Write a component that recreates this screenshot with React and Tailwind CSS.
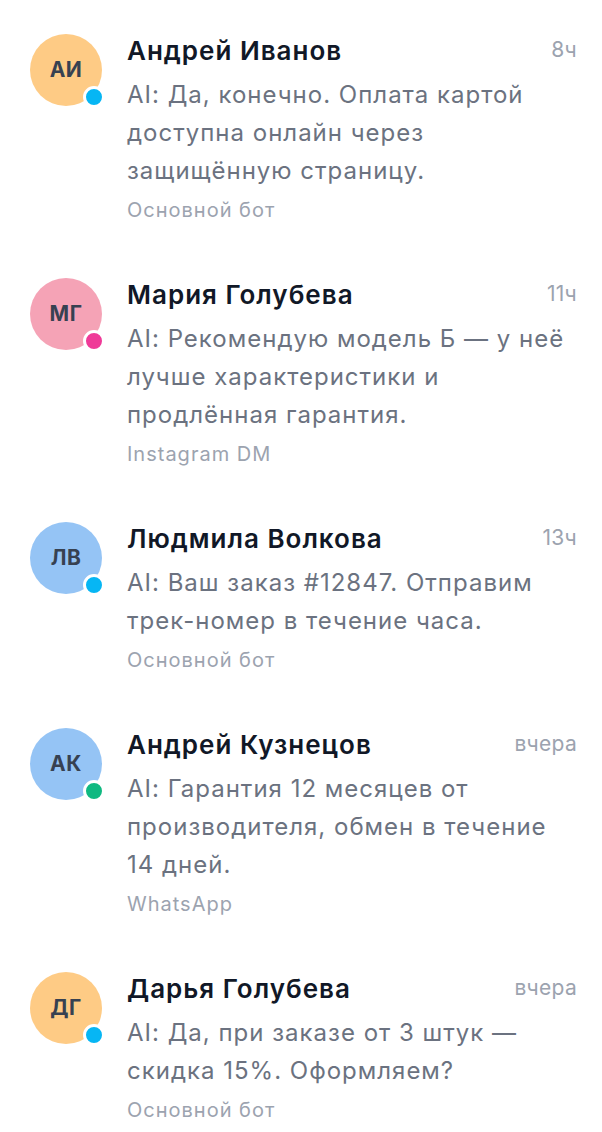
const chats = [
  {
    initials: 'АИ',
    name: 'Андрей Иванов',
    time: '8ч',
    text: 'AI: Да, конечно. Оплата картой доступна онлайн через защищённую страницу.',
    source: 'Основной бот',
    avatar: 'bg-[#fecb85]',
    dot: 'bg-[#06b6f4]',
  },
  {
    initials: 'МГ',
    name: 'Мария Голубева',
    time: '11ч',
    text: 'AI: Рекомендую модель Б — у неё лучше характеристики и продлённая гарантия.',
    source: 'Instagram DM',
    avatar: 'bg-[#f5a3b6]',
    dot: 'bg-[#ef3a98]',
  },
  {
    initials: 'ЛВ',
    name: 'Людмила Волкова',
    time: '13ч',
    text: 'AI: Ваш заказ #12847. Отправим трек-номер в течение часа.',
    source: 'Основной бот',
    avatar: 'bg-[#95c4f5]',
    dot: 'bg-[#06b6f4]',
  },
  {
    initials: 'АК',
    name: 'Андрей Кузнецов',
    time: 'вчера',
    text: 'AI: Гарантия 12 месяцев от производителя, обмен в течение 14 дней.',
    source: 'WhatsApp',
    avatar: 'bg-[#95c4f5]',
    dot: 'bg-[#10b981]',
  },
  {
    initials: 'ДГ',
    name: 'Дарья Голубева',
    time: 'вчера',
    text: 'AI: Да, при заказе от 3 штук — скидка 15%. Оформляем?',
    source: 'Основной бот',
    avatar: 'bg-[#fecb85]',
    dot: 'bg-[#06b6f4]',
  },
]

function ChatRow({ chat }) {
  return (
    <div className="flex items-start gap-[25px] pl-[30px] pr-[25px] py-[27px]">
      <div className={`relative w-[72px] h-[72px] rounded-full shrink-0 flex items-center justify-center ${chat.avatar}`}>
        <span className="text-[21px] font-bold text-[#374151] tracking-[0.5px]">{chat.initials}</span>
        <span className={`absolute right-[-3px] bottom-[-2px] w-[22px] h-[22px] rounded-full border-[3px] border-white ${chat.dot}`} />
      </div>
      <div className="flex-1 min-w-0">
        <div className="flex items-center justify-between gap-3 h-[32px]">
          <span className="text-[26px] font-semibold text-[#111827] tracking-[1px] truncate">{chat.name}</span>
          <span className="text-[21px] text-[#9ca3af] tracking-[0.3px] shrink-0">{chat.time}</span>
        </div>
        <p className="mt-[10px] text-[24px] leading-[38px] text-[#6b7280] tracking-[1px]">{chat.text}</p>
        <div className="mt-[7px] text-[20px] leading-[27px] text-[#9ca3af] tracking-[1px]">{chat.source}</div>
      </div>
    </div>
  )
}

export default function App() {
  return (
    <div className="min-h-screen bg-white pt-[7px]" style={{ fontFamily: 'Inter, "Noto Sans", sans-serif' }}>
      {chats.map((chat) => (
        <ChatRow key={chat.name} chat={chat} />
      ))}
    </div>
  )
}
